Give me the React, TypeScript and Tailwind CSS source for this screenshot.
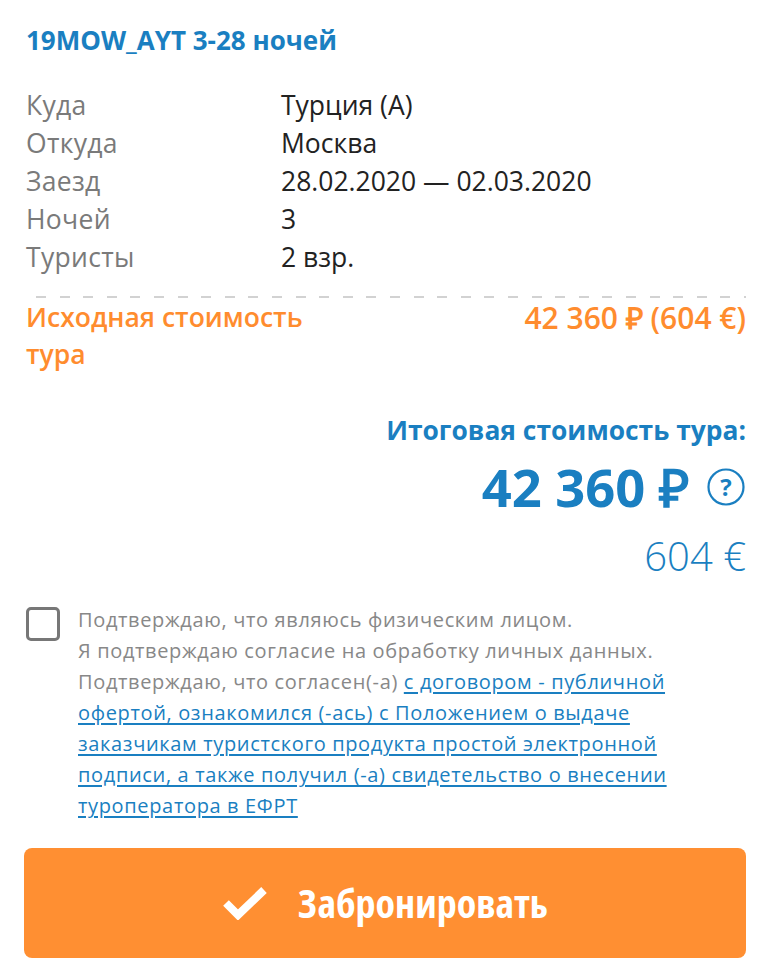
import React from 'react';

const rows = [
    { label: 'Куда', value: 'Турция (A)' },
    { label: 'Откуда', value: 'Москва' },
    { label: 'Заезд', value: '28.02.2020 — 02.03.2020' },
    { label: 'Ночей', value: '3' },
    { label: 'Туристы', value: '2 взр.' },
];

const linkLines = [
    'с договором - публичной',
    'офертой, ознакомился (-ась) с Положением о выдаче',
    'заказчикам туристского продукта простой электронной',
    'подписи, а также получил (-а) свидетельство о внесении',
    'туроператора в ЕФРТ',
];

export default function App() {
    return (
        <div className="w-[780px] min-h-[977px] bg-white px-[26px] pt-[24px] font-['Open_Sans',sans-serif]">
            <h1 className="text-[26px] leading-[32px] font-bold text-[#1a7fc1]">19MOW_AYT 3-28 ночей</h1>

            <div className="mt-[30px] flex flex-col">
                {rows.map((r) => (
                    <div key={r.label} className="flex text-[26.5px] leading-[38px]">
                        <div className="w-[255px] text-[#7a7a7a] tracking-[0.3px]">{r.label}</div>
                        <div className="text-[#222]">{r.value}</div>
                    </div>
                ))}
            </div>

            <div className="mt-[20px] ml-[10px] mr-[8px] h-[2px] bg-[repeating-linear-gradient(90deg,#d2d2d2_0_10px,transparent_10px_23.6px)]" />

            <div className="mt-[1px] mr-[8px] flex justify-between leading-[37px] text-[#ff8c2e] font-semibold">
                <div className="w-[300px] text-[26.5px]">Исходная стоимость тура</div>
                <div className="text-[30px]">42 360 ₽ (604 €)</div>
            </div>

            <div className="mt-[40px] mr-[8px] flex flex-col items-end text-[#1a7fc1]">
                <div className="text-[26.4px] leading-[34px] font-bold">Итоговая стоимость тура:</div>
                <div className="mt-[10px] flex items-center gap-[16px]">
                    <span className="text-[52.5px] leading-[60px] font-bold">42 360 ₽</span>
                    <svg width="40" height="40" viewBox="0 0 40 40" fill="none">
                        <circle cx="20" cy="20" r="17.5" stroke="#1a7fc1" strokeWidth="2.2" />
                        <text x="20" y="28.5" textAnchor="middle" fontSize="24" fontWeight="700" fill="#1a7fc1" fontFamily="Open Sans, sans-serif">?</text>
                    </svg>
                </div>
                <div className="mt-[17px] text-[40px] leading-[44px] font-light">604 €</div>
            </div>

            <div className="mt-[26px] flex gap-[18px]">
                <div className="mt-[3px] w-[34px] h-[34px] shrink-0 rounded-[5px] border-[3px] border-[#777]" />
                <p className="text-[20px] leading-[31px] text-[#888] tracking-[0.65px] whitespace-nowrap">
                    Подтверждаю, что являюсь физическим лицом.
                    <br />
                    Я подтверждаю согласие на обработку личных данных.
                    <br />
                    Подтверждаю, что согласен(-а){' '}
                    {linkLines.map((l, i) => (
                        <React.Fragment key={i}>
                            {i > 0 && <br />}
                            <a className="text-[#1a7fc1] underline underline-offset-[3px] decoration-[1.5px]">{l}</a>
                        </React.Fragment>
                    ))}
                </p>
            </div>

            <button className="mt-[27px] w-[722px] h-[110px] -ml-[2px] rounded-[8px] bg-[#ff8f32] flex items-center justify-center gap-[30px] text-white">
                <svg width="46" height="34" viewBox="0 0 46 34" fill="none">
                    <path d="M4 17 L16 29 L42 4" stroke="white" strokeWidth="8" strokeLinejoin="miter" />
                </svg>
                <span className="text-[40px] font-bold font-stretch-condensed">Забронировать</span>
            </button>
        </div>
    );
}
